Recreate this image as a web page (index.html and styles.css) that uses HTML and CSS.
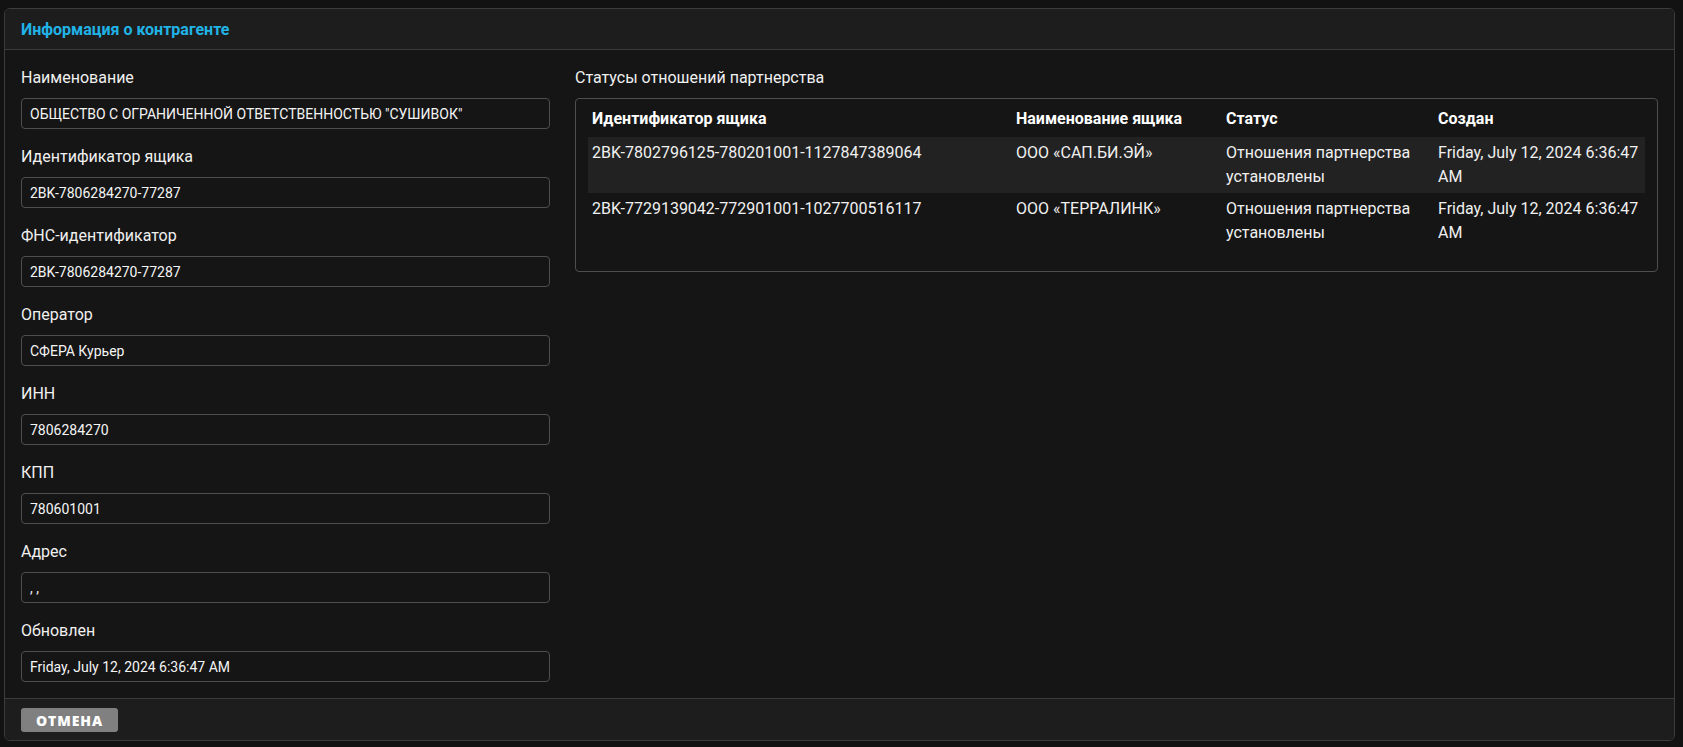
FILE: index.html
```html
<!DOCTYPE html>
<html lang="ru">
<head>
<meta charset="utf-8">
<title>Информация о контрагенте</title>
<link rel="stylesheet" href="styles.css">
</head>
<body>
<div class="panel">
  <div class="panel-header">Информация о контрагенте</div>
  <div class="panel-body">
    <div class="fields">
      <div class="field">
        <div class="label">Наименование</div>
        <div class="input">ОБЩЕСТВО С ОГРАНИЧЕННОЙ ОТВЕТСТВЕННОСТЬЮ "СУШИВОК"</div>
      </div>
      <div class="field">
        <div class="label">Идентификатор ящика</div>
        <div class="input">2BK-7806284270-77287</div>
      </div>
      <div class="field">
        <div class="label">ФНС-идентификатор</div>
        <div class="input">2BK-7806284270-77287</div>
      </div>
      <div class="field">
        <div class="label">Оператор</div>
        <div class="input">СФЕРА Курьер</div>
      </div>
      <div class="field">
        <div class="label">ИНН</div>
        <div class="input">7806284270</div>
      </div>
      <div class="field">
        <div class="label">КПП</div>
        <div class="input">780601001</div>
      </div>
      <div class="field">
        <div class="label">Адрес</div>
        <div class="input">, ,</div>
      </div>
      <div class="field">
        <div class="label">Обновлен</div>
        <div class="input">Friday, July 12, 2024 6:36:47 AM</div>
      </div>
    </div>
    <div class="statuses">
      <div class="label">Статусы отношений партнерства</div>
      <div class="table-box">
        <table class="grid">
          <colgroup>
            <col class="c1"><col class="c2"><col class="c3"><col class="c4">
          </colgroup>
          <thead>
            <tr>
              <th>Идентификатор ящика</th>
              <th>Наименование ящика</th>
              <th>Статус</th>
              <th>Создан</th>
            </tr>
          </thead>
          <tbody>
            <tr class="odd">
              <td>2BK-7802796125-780201001-1127847389064</td>
              <td>ООО «САП.БИ.ЭЙ»</td>
              <td>Отношения партнерства установлены</td>
              <td>Friday, July 12, 2024 6:36:47 AM</td>
            </tr>
            <tr>
              <td>2BK-7729139042-772901001-1027700516117</td>
              <td>ООО «ТЕРРАЛИНК»</td>
              <td>Отношения партнерства установлены</td>
              <td>Friday, July 12, 2024 6:36:47 AM</td>
            </tr>
          </tbody>
        </table>
      </div>
    </div>
  </div>
  <div class="panel-footer">
    <button class="btn-cancel">Отмена</button>
  </div>
</div>
</body>
</html>
```

FILE: styles.css
```css
html, body {
  margin: 0;
  padding: 0;
  background: #121212;
}
body {
  padding: 8px 8px 6px 4px;
  font-family: Roboto, "Noto Sans", sans-serif;
  color: #f2f2f2;
}
.panel {
  border: 1px solid #3c3c3c;
  border-radius: 6px;
  background: #151515;
  overflow: hidden;
}
.panel-header {
  background: #1d1d1d;
  border-bottom: 1px solid #3c3c3c;
  height: 41px;
  box-sizing: border-box;
  padding: 0 16px;
  display: flex;
  align-items: center;
  font-size: 16px;
  font-weight: 700;
  color: #21b3e6;
}
.panel-body {
  display: grid;
  grid-template-columns: 529px 1fr;
  column-gap: 25px;
  padding: 16px;
}
.fields {
  display: flex;
  flex-direction: column;
  gap: 16px;
}
.label {
  font-size: 16px;
  line-height: 24px;
  color: #f0f0f0;
  margin-bottom: 8px;
}
.input {
  height: 31px;
  box-sizing: border-box;
  border: 1px solid #4e4e4e;
  border-radius: 4px;
  padding: 0 8px;
  display: flex;
  align-items: center;
  font-size: 14px;
  color: #f4f4f4;
}
.table-box {
  border: 1px solid #4e4e4e;
  border-radius: 4px;
  padding: 4px 12px 22px 12px;
}
.grid {
  width: 100%;
  border-collapse: collapse;
  table-layout: fixed;
  font-size: 16px;
  line-height: 24px;
}
.c1 { width: 424px; }
.c2 { width: 210px; }
.c3 { width: 212px; }
.grid th {
  text-align: left;
  font-weight: 700;
  color: #ffffff;
  padding: 4px 4px 6px 4px;
  vertical-align: top;
}
.grid td {
  padding: 4px;
  vertical-align: top;
  color: #f0f0f0;
}
.grid tr.odd td {
  background: #222222;
}
.panel-footer {
  background: #1d1d1d;
  border-top: 1px solid #3c3c3c;
  height: 42px;
  box-sizing: border-box;
  padding: 9px 16px 0 16px;
}
.btn-cancel {
  display: block;
  width: 97px;
  height: 24px;
  border: none;
  border-radius: 3px;
  background: #808080;
  color: #ffffff;
  font-family: "Open Sans", Roboto, sans-serif;
  font-weight: 800;
  font-size: 14px;
  letter-spacing: 0.9px;
  text-transform: uppercase;
  padding: 0;
  cursor: pointer;
}
```
